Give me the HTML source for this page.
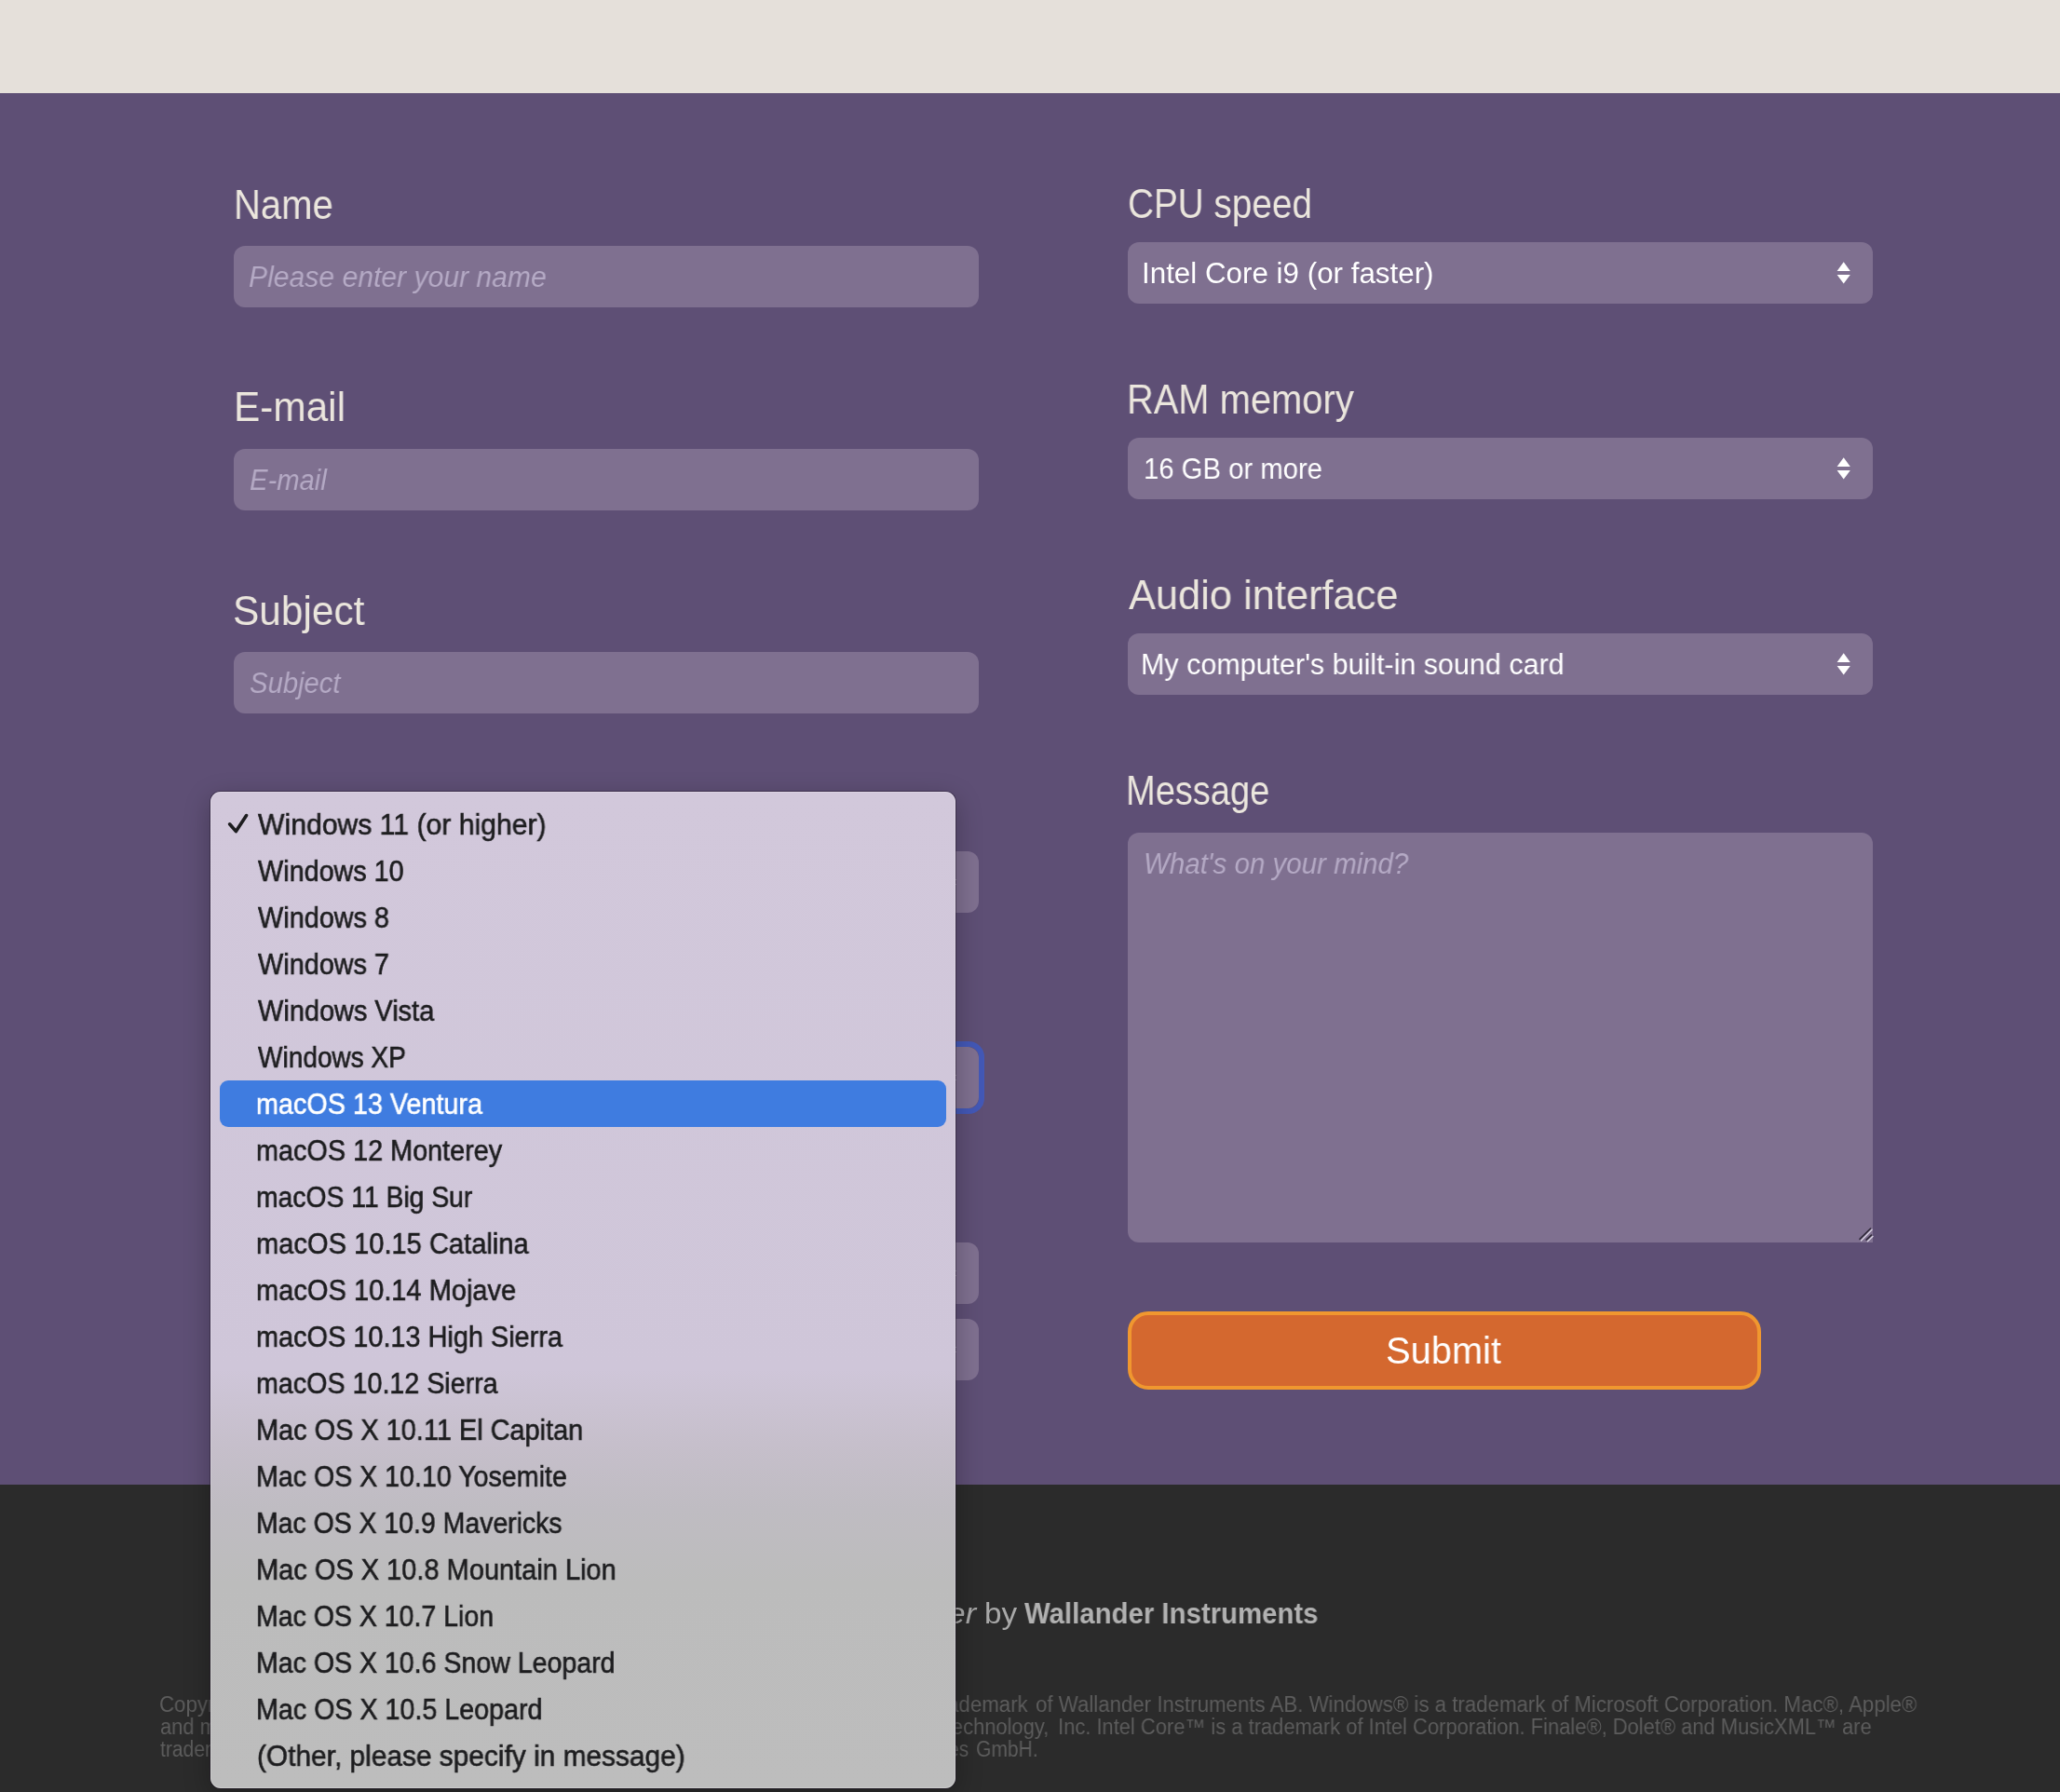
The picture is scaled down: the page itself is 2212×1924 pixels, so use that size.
<!DOCTYPE html>
<html>
<head>
<meta charset="utf-8">
<style>
html,body{margin:0;padding:0;}
body{width:2212px;height:1924px;position:relative;overflow:hidden;background:#5e4f75;font-family:"Liberation Sans",sans-serif;}
.abs{position:absolute;}
.t{position:absolute;white-space:nowrap;transform-origin:0 0;will-change:transform;}
#top{left:0;top:0;width:2212px;height:100px;background:#e5e0da;}
#foot{left:0;top:1594px;width:2212px;height:330px;background:#2b2b2b;}
.box{position:absolute;background:#7f7090;border-radius:12px;}
.arr{position:absolute;}
#menu{left:226px;top:850px;width:800px;height:1070px;border-radius:11px;overflow:hidden;
  background:linear-gradient(to bottom,#d2c8db 0px,#cfc6d9 620px,#c6bfcb 700px,#bfbcc2 770px,#bcbcbc 850px,#bdbdbd 1070px);
  box-shadow:inset 0 0 0 1px rgba(255,255,255,0.22);}
#menushadow{left:226px;top:850px;width:800px;height:1070px;border-radius:11px;
  box-shadow:0 0 0 1px rgba(30,20,40,0.45),0 8px 28px rgba(0,0,0,0.28);}
#hl{left:10px;top:310px;width:780px;height:50px;background:#3f7ce0;border-radius:9px;}
</style>
</head>
<body>
<div id="top" class="abs"></div>
<div id="foot" class="abs"></div>

<!-- left column boxes -->
<div class="box" style="left:251px;top:264px;width:800px;height:66px;"></div>
<div class="box" style="left:251px;top:482px;width:800px;height:66px;"></div>
<div class="box" style="left:251px;top:700px;width:800px;height:66px;"></div>
<div class="box" style="left:251px;top:914px;width:800px;height:66px;"></div>
<div class="abs" style="left:245px;top:1118px;width:800px;height:66px;border:6px solid #4358b6;border-radius:17px;"></div>
<div class="box" style="left:251px;top:1124px;width:800px;height:66px;"></div>
<div class="box" style="left:251px;top:1334px;width:800px;height:66px;"></div>
<div class="box" style="left:251px;top:1416px;width:800px;height:66px;"></div>

<svg class="arr" style="left:1000px;top:914px" width="40" height="66" viewBox="1960 260 40 66"><path d="M1972.6 291 L1986.8 291 L1979.7 281.2 Z M1972.6 295 L1986.8 295 L1979.7 304.6 Z" fill="#fff"/></svg>
<svg class="arr" style="left:1000px;top:1124px" width="40" height="66" viewBox="1960 260 40 66"><path d="M1972.6 291 L1986.8 291 L1979.7 281.2 Z M1972.6 295 L1986.8 295 L1979.7 304.6 Z" fill="#fff"/></svg>
<svg class="arr" style="left:1000px;top:1334px" width="40" height="66" viewBox="1960 260 40 66"><path d="M1972.6 291 L1986.8 291 L1979.7 281.2 Z M1972.6 295 L1986.8 295 L1979.7 304.6 Z" fill="#fff"/></svg>
<svg class="arr" style="left:1000px;top:1416px" width="40" height="66" viewBox="1960 260 40 66"><path d="M1972.6 291 L1986.8 291 L1979.7 281.2 Z M1972.6 295 L1986.8 295 L1979.7 304.6 Z" fill="#fff"/></svg>
<!-- right column boxes -->
<div class="box" style="left:1211px;top:260px;width:800px;height:66px;"></div>
<div class="box" style="left:1211px;top:470px;width:800px;height:66px;"></div>
<div class="box" style="left:1211px;top:680px;width:800px;height:66px;"></div>
<svg class="arr" style="left:1960px;top:260px" width="40" height="66" viewBox="1960 260 40 66"><path d="M1972.6 291 L1986.8 291 L1979.7 281.2 Z M1972.6 295 L1986.8 295 L1979.7 304.6 Z" fill="#fff"/></svg>
<svg class="arr" style="left:1960px;top:470px" width="40" height="66" viewBox="1960 260 40 66"><path d="M1972.6 291 L1986.8 291 L1979.7 281.2 Z M1972.6 295 L1986.8 295 L1979.7 304.6 Z" fill="#fff"/></svg>
<svg class="arr" style="left:1960px;top:680px" width="40" height="66" viewBox="1960 260 40 66"><path d="M1972.6 291 L1986.8 291 L1979.7 281.2 Z M1972.6 295 L1986.8 295 L1979.7 304.6 Z" fill="#fff"/></svg>

<div class="box" style="left:1211px;top:894px;width:800px;height:440px;border-bottom-right-radius:0;"></div>
<svg class="arr" style="left:1990px;top:1312px" width="24" height="24" viewBox="1990 1312 24 24">
  <path d="M1997 1330.4 L2008.6 1319" stroke="#2f2838" stroke-width="1.6" stroke-linecap="round"/>
  <path d="M1998.5 1331.9 L2010.1 1320.3" stroke="#d8d2e2" stroke-width="1.4" stroke-linecap="round"/>
  <path d="M2004.1 1331.2 L2009.5 1326.1" stroke="#2f2838" stroke-width="1.6" stroke-linecap="round"/>
  <path d="M2005.4 1332.8 L2011 1327.5" stroke="#d8d2e2" stroke-width="1.4" stroke-linecap="round"/>
</svg>

<div class="abs" style="left:1211px;top:1408px;width:672px;height:76px;background:#d4682f;border:4px solid #f0972f;border-radius:22px;"></div>

<div class="t" style="left:250.67px;top:197.60px;font-size:44px;line-height:44px;color:#ebe6dd;transform:scaleX(0.9088);">Name</div>
<div class="t" style="left:250.71px;top:415.40px;font-size:44px;line-height:44px;color:#ebe6dd;transform:scaleX(0.9622);">E-mail</div>
<div class="t" style="left:250.47px;top:633.50px;font-size:44px;line-height:44px;color:#ebe6dd;transform:scaleX(0.9638);">Subject</div>
<div class="t" style="left:1210.84px;top:197.30px;font-size:44px;line-height:44px;color:#ebe6dd;transform:scaleX(0.8801);">CPU speed</div>
<div class="t" style="left:1209.88px;top:407.20px;font-size:44px;line-height:44px;color:#ebe6dd;transform:scaleX(0.9060);">RAM memory</div>
<div class="t" style="left:1211.70px;top:617.20px;font-size:44px;line-height:44px;color:#ebe6dd;transform:scaleX(0.9865);">Audio interface</div>
<div class="t" style="left:1208.61px;top:827.20px;font-size:44px;line-height:44px;color:#ebe6dd;transform:scaleX(0.8646);">Message</div>
<div class="t" style="left:1225.98px;top:278.40px;font-size:31px;line-height:31px;color:#ffffff;transform:scaleX(1.0111);">Intel Core i9 (or faster)</div>
<div class="t" style="left:1227.51px;top:488.20px;font-size:31px;line-height:31px;color:#ffffff;transform:scaleX(0.9442);">16 GB or more</div>
<div class="t" style="left:1225.03px;top:698.20px;font-size:31px;line-height:31px;color:#ffffff;transform:scaleX(0.9829);">My computer's built-in sound card</div>
<div class="t" style="left:266.80px;top:282.00px;font-size:31px;line-height:31px;color:#b5aac5;transform:scaleX(0.9714);font-style:italic;">Please enter your name</div>
<div class="t" style="left:267.90px;top:500.00px;font-size:31px;line-height:31px;color:#b5aac5;transform:scaleX(0.9421);font-style:italic;">E-mail</div>
<div class="t" style="left:268.40px;top:718.00px;font-size:31px;line-height:31px;color:#b5aac5;transform:scaleX(0.9429);font-style:italic;">Subject</div>
<div class="t" style="left:1227.70px;top:912.30px;font-size:31px;line-height:31px;color:#b5aac5;transform:scaleX(0.9517);font-style:italic;">What's on your mind?</div>
<div class="t" style="left:1488.40px;top:1429.90px;font-size:40px;line-height:40px;color:#ffffff;transform:scaleX(0.9953);">Submit</div>
<div class="t" style="left:1057.36px;top:1716.50px;font-size:31px;line-height:31px;color:#a8a8a8;transform:scaleX(1.0723);">by</div>
<div class="t" style="left:1099.50px;top:1716.50px;font-size:31px;line-height:31px;color:#b1b1b1;transform:scaleX(0.9473);font-weight:bold;">Wallander Instruments</div>
<div class="t" style="left:823.00px;top:1716.50px;font-size:31px;line-height:31px;color:#a8a8a8;transform:scaleX(1.1075);font-style:italic;">NotePerformer</div>
<div class="t" style="left:170.83px;top:1819.00px;font-size:23px;line-height:23px;color:#5d5d5d;transform:scaleX(0.9676);">Copyright © 2023 Wallander</div>
<div class="t" style="left:1111.70px;top:1819.00px;font-size:23px;line-height:23px;color:#5d5d5d;transform:scaleX(0.9676);">of Wallander Instruments AB. Windows® is a trademark of Microsoft Corporation. Mac®, Apple®</div>
<div class="t" style="left:688.68px;top:1819.00px;font-size:23px;line-height:23px;color:#5d5d5d;transform:scaleX(0.9676);">NotePerformer® is a registered trademark</div>
<div class="t" style="left:171.80px;top:1843.00px;font-size:23px;line-height:23px;color:#5d5d5d;transform:scaleX(0.9525);">and macOS® are trademarks</div>
<div class="t" style="left:1136.09px;top:1843.00px;font-size:23px;line-height:23px;color:#5d5d5d;transform:scaleX(0.9525);">Inc. Intel Core™ is a trademark of Intel Corporation. Finale®, Dolet® and MusicXML™ are</div>
<div class="t" style="left:696.33px;top:1843.00px;font-size:23px;line-height:23px;color:#5d5d5d;transform:scaleX(0.9525);">Sibelius® is a trademark of Avid Technology,</div>
<div class="t" style="left:171.80px;top:1867.00px;font-size:23px;line-height:23px;color:#5d5d5d;transform:scaleX(0.9141);">trademarks of MakeMusic</div>
<div class="t" style="left:1047.59px;top:1867.00px;font-size:23px;line-height:23px;color:#5d5d5d;transform:scaleX(0.9141);">GmbH.</div>
<div class="t" style="left:635.22px;top:1867.00px;font-size:23px;line-height:23px;color:#5d5d5d;transform:scaleX(0.9141);">trademark of Steinberg Media Technologies</div>

<!-- dropdown menu -->
<div id="menushadow" class="abs"></div>
<div id="menu" class="abs">
  <div id="hl" class="abs"></div>
  <svg class="abs" style="left:0;top:0" width="60" height="60" viewBox="226 850 60 60"><path d="M246.6 884.8 L253.4 892.6 L264.6 875.6" fill="none" stroke="#1d1d1f" stroke-width="3.6" stroke-linecap="round" stroke-linejoin="round"/></svg>
<div class="t" style="left:50.50px;top:20.20px;font-size:31px;line-height:31px;color:#1d1d1f;transform:scaleX(0.9731);-webkit-text-stroke:0.6px currentColor;">Windows 11 (or higher)</div>
<div class="t" style="left:50.50px;top:70.20px;font-size:31px;line-height:31px;color:#1d1d1f;transform:scaleX(0.9282);-webkit-text-stroke:0.6px currentColor;">Windows 10</div>
<div class="t" style="left:50.50px;top:120.20px;font-size:31px;line-height:31px;color:#1d1d1f;transform:scaleX(0.9304);-webkit-text-stroke:0.6px currentColor;">Windows 8</div>
<div class="t" style="left:50.50px;top:170.20px;font-size:31px;line-height:31px;color:#1d1d1f;transform:scaleX(0.9304);-webkit-text-stroke:0.6px currentColor;">Windows 7</div>
<div class="t" style="left:50.50px;top:220.20px;font-size:31px;line-height:31px;color:#1d1d1f;transform:scaleX(0.9337);-webkit-text-stroke:0.6px currentColor;">Windows Vista</div>
<div class="t" style="left:50.50px;top:270.20px;font-size:31px;line-height:31px;color:#1d1d1f;transform:scaleX(0.9043);-webkit-text-stroke:0.6px currentColor;">Windows XP</div>
<div class="t" style="left:48.64px;top:320.20px;font-size:31px;line-height:31px;color:#ffffff;transform:scaleX(0.9279);-webkit-text-stroke:0.6px currentColor;">macOS 13 Ventura</div>
<div class="t" style="left:48.64px;top:370.20px;font-size:31px;line-height:31px;color:#1d1d1f;transform:scaleX(0.9293);-webkit-text-stroke:0.6px currentColor;">macOS 12 Monterey</div>
<div class="t" style="left:48.67px;top:420.20px;font-size:31px;line-height:31px;color:#1d1d1f;transform:scaleX(0.9131);-webkit-text-stroke:0.6px currentColor;">macOS 11 Big Sur</div>
<div class="t" style="left:48.62px;top:470.20px;font-size:31px;line-height:31px;color:#1d1d1f;transform:scaleX(0.9380);-webkit-text-stroke:0.6px currentColor;">macOS 10.15 Catalina</div>
<div class="t" style="left:48.63px;top:520.20px;font-size:31px;line-height:31px;color:#1d1d1f;transform:scaleX(0.9368);-webkit-text-stroke:0.6px currentColor;">macOS 10.14 Mojave</div>
<div class="t" style="left:48.64px;top:570.20px;font-size:31px;line-height:31px;color:#1d1d1f;transform:scaleX(0.9313);-webkit-text-stroke:0.6px currentColor;">macOS 10.13 High Sierra</div>
<div class="t" style="left:48.65px;top:620.20px;font-size:31px;line-height:31px;color:#1d1d1f;transform:scaleX(0.9245);-webkit-text-stroke:0.6px currentColor;">macOS 10.12 Sierra</div>
<div class="t" style="left:48.64px;top:670.20px;font-size:31px;line-height:31px;color:#1d1d1f;transform:scaleX(0.9322);-webkit-text-stroke:0.6px currentColor;">Mac OS X 10.11 El Capitan</div>
<div class="t" style="left:48.66px;top:720.20px;font-size:31px;line-height:31px;color:#1d1d1f;transform:scaleX(0.9223);-webkit-text-stroke:0.6px currentColor;">Mac OS X 10.10 Yosemite</div>
<div class="t" style="left:48.67px;top:770.20px;font-size:31px;line-height:31px;color:#1d1d1f;transform:scaleX(0.9170);-webkit-text-stroke:0.6px currentColor;">Mac OS X 10.9 Mavericks</div>
<div class="t" style="left:48.63px;top:820.20px;font-size:31px;line-height:31px;color:#1d1d1f;transform:scaleX(0.9351);-webkit-text-stroke:0.6px currentColor;">Mac OS X 10.8 Mountain Lion</div>
<div class="t" style="left:48.66px;top:870.20px;font-size:31px;line-height:31px;color:#1d1d1f;transform:scaleX(0.9195);-webkit-text-stroke:0.6px currentColor;">Mac OS X 10.7 Lion</div>
<div class="t" style="left:48.66px;top:920.20px;font-size:31px;line-height:31px;color:#1d1d1f;transform:scaleX(0.9206);-webkit-text-stroke:0.6px currentColor;">Mac OS X 10.6 Snow Leopard</div>
<div class="t" style="left:48.65px;top:970.20px;font-size:31px;line-height:31px;color:#1d1d1f;transform:scaleX(0.9246);-webkit-text-stroke:0.6px currentColor;">Mac OS X 10.5 Leopard</div>
<div class="t" style="left:49.54px;top:1020.20px;font-size:31px;line-height:31px;color:#1d1d1f;transform:scaleX(0.9630);-webkit-text-stroke:0.6px currentColor;">(Other, please specify in message)</div>
</div>
</body>
</html>
